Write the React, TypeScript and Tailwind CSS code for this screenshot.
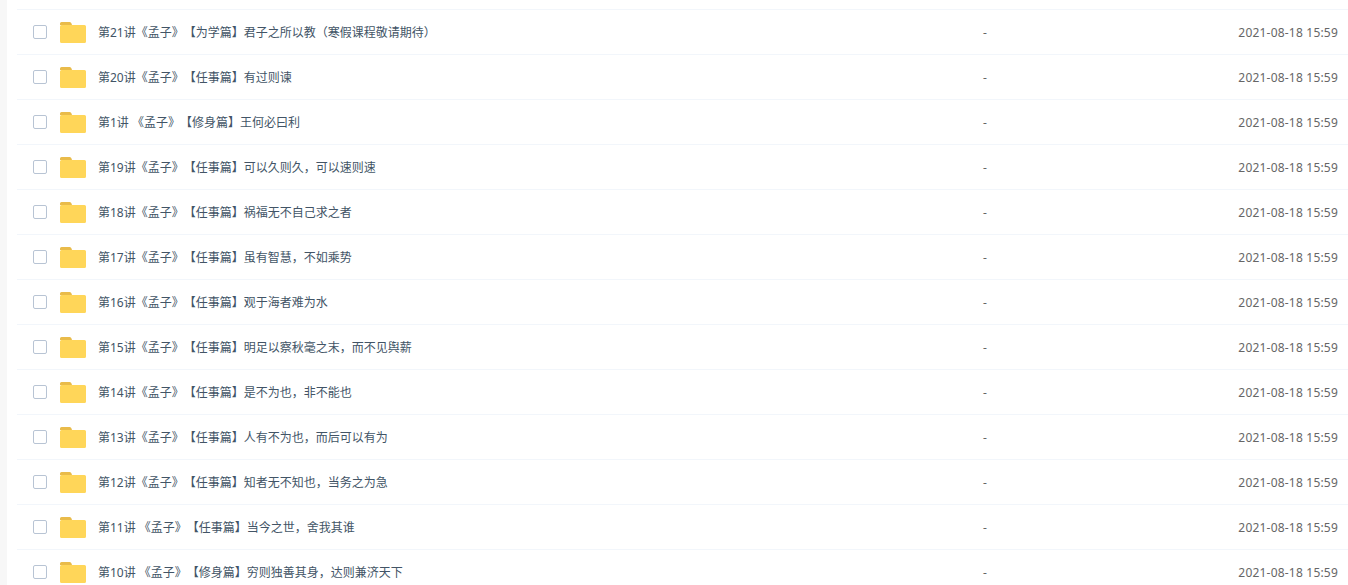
const rows = [
  "第21讲《孟子》【为学篇】君子之所以教（寒假课程敬请期待）",
  "第20讲《孟子》【任事篇】有过则谏",
  "第1讲 《孟子》【修身篇】王何必曰利",
  "第19讲《孟子》【任事篇】可以久则久，可以速则速",
  "第18讲《孟子》【任事篇】祸福无不自己求之者",
  "第17讲《孟子》【任事篇】虽有智慧，不如乘势",
  "第16讲《孟子》【任事篇】观于海者难为水",
  "第15讲《孟子》【任事篇】明足以察秋毫之末，而不见舆薪",
  "第14讲《孟子》【任事篇】是不为也，非不能也",
  "第13讲《孟子》【任事篇】人有不为也，而后可以有为",
  "第12讲《孟子》【任事篇】知者无不知也，当务之为急",
  "第11讲 《孟子》【任事篇】当今之世，舍我其谁",
  "第10讲 《孟子》【修身篇】穷则独善其身，达则兼济天下",
];

const FolderIcon = () => (
  <svg width="26" height="21" viewBox="0 0 26 21" className="block">
    <path d="M0 1.5A1.5 1.5 0 0 1 1.5 0h8A2 2 0 0 1 11.5 1.5L12 3H0z" fill="#e9bb4a" />
    <path d="M0 4.5A1.5 1.5 0 0 1 1.5 3h23A1.5 1.5 0 0 1 26 4.5v15a1.5 1.5 0 0 1-1.5 1.5h-23A1.5 1.5 0 0 1 0 19.5z" fill="#ffd659" />
  </svg>
);

const Row = ({ name }: { name: string }) => (
  <div className="flex h-[45px] items-center border-t border-[#f2f6fb] pl-4 pr-[10px]">
    <span className="h-[14px] w-[14px] shrink-0 rounded-[2px] border border-[#b8c4d4] bg-white" />
    <span className="ml-[13px] shrink-0">
      <FolderIcon />
    </span>
    <span className="ml-3 w-[885px] shrink-0 truncate pt-[2px] text-[#425466] [text-spacing-trim:space-all]">{name}</span>
    <span className="pt-[2px] text-[#666]">-</span>
    <span className="ml-auto pt-[2px] tracking-[0.2px] text-[#666]">2021-08-18 15:59</span>
  </div>
);

export default function App() {
  return (
    <div className="flex h-[585px] overflow-hidden bg-white font-['Noto_Sans','Noto_Sans_CJK_SC',sans-serif] text-xs">
      <div className="w-[7px] shrink-0 bg-[#f7f7f7]" />
      <div className="min-w-0 flex-1 pl-[10px] pt-[9px]">
        {rows.map((name) => (
          <Row key={name} name={name} />
        ))}
      </div>
    </div>
  );
}
